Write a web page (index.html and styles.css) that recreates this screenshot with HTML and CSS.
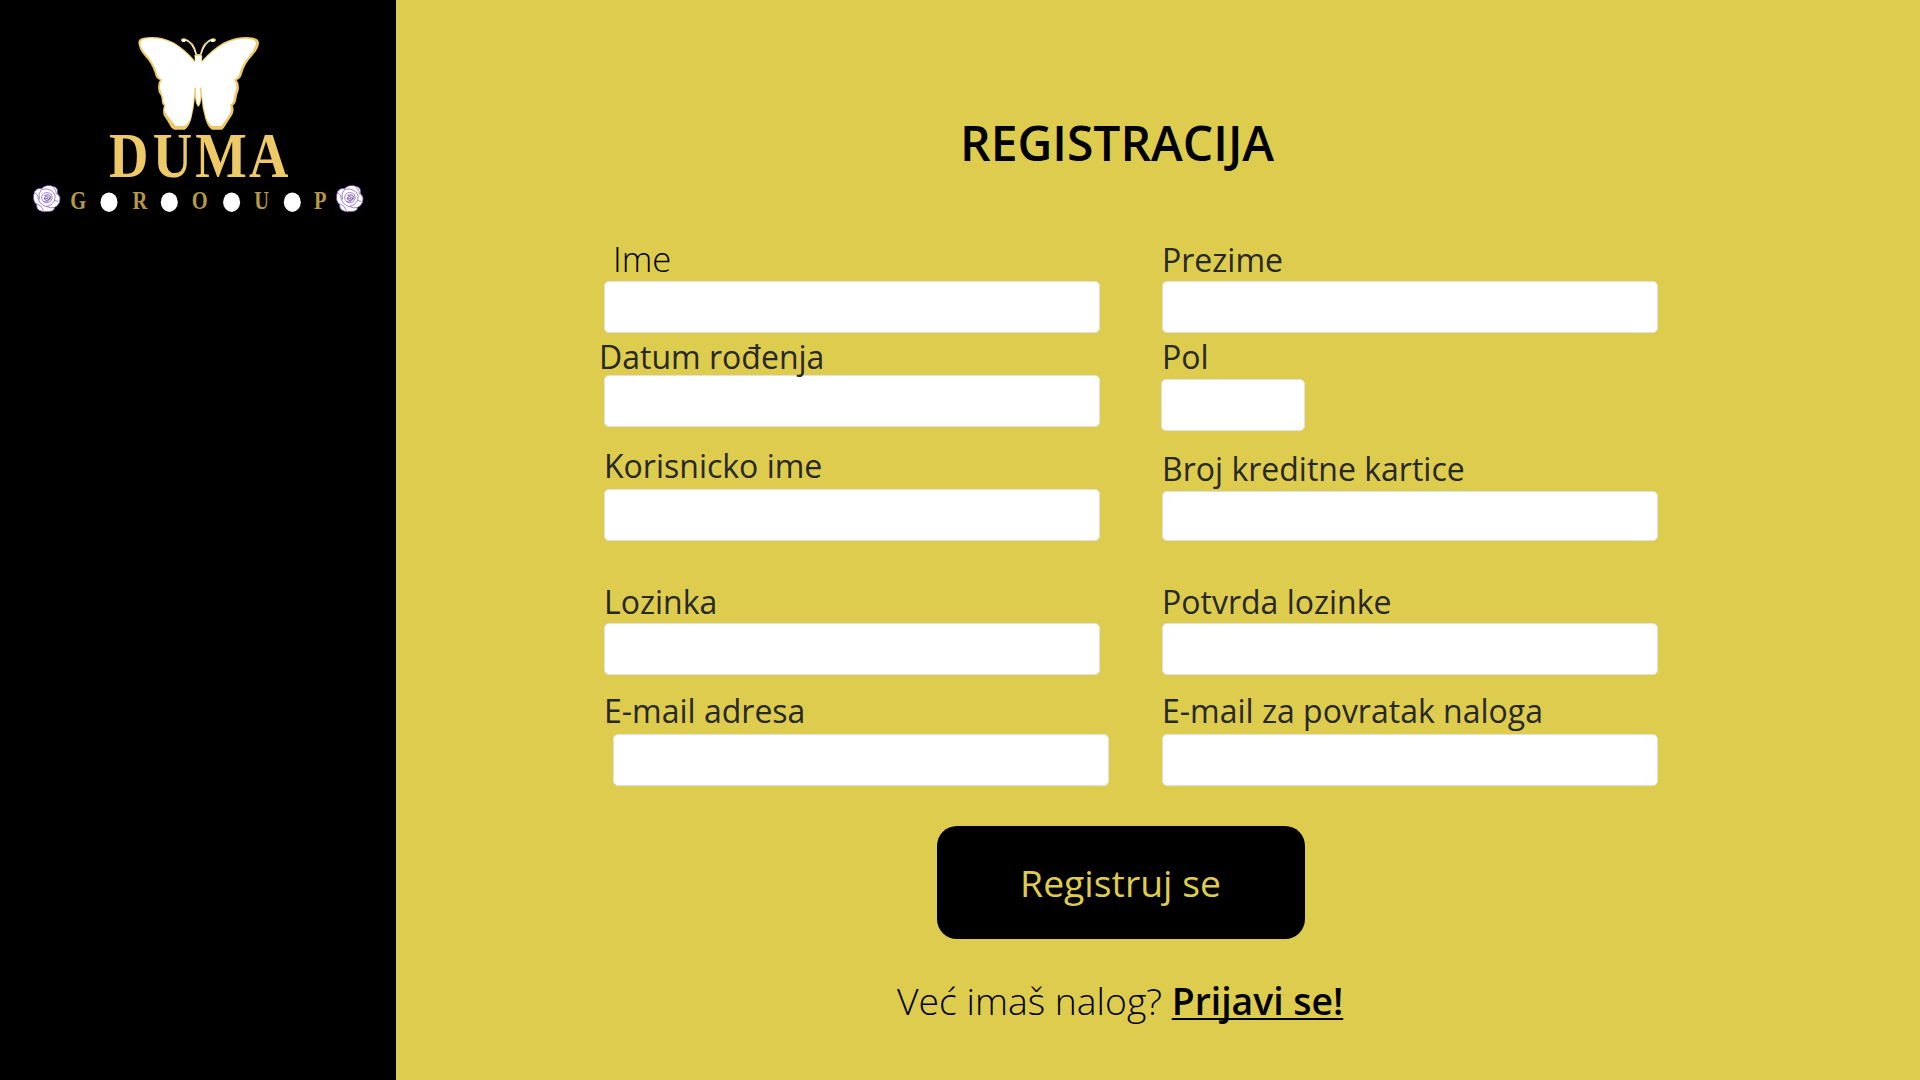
FILE: index.html
```html
<!DOCTYPE html>
<html lang="sr-Latn">
<head>
<meta charset="utf-8">
<title>Duma Group – Registracija</title>
<link rel="stylesheet" href="styles.css">
</head>
<body>
<div class="page">
  <aside class="sidebar">
    <svg class="logo" viewBox="0 0 396 230" role="img" aria-label="Duma Group">
      <defs>
        <g id="rose">
          <path d="M-12 -7 Q-9 -11 -5 -10 Q0 -15 7 -12 Q12 -11 11 -5 Q15 -1 13 4 Q11 8 8 9 Q8 13 2 13 Q-3 14 -7 12 Q-10 11 -10 6 Q-15 2 -12 -7Z" fill="#fff" stroke="#6a40b0" stroke-width=".8"/>
          <g fill="none" stroke="#6236ae" stroke-width=".6">
            <path d="M-4 -4 Q0 -8 5 -4 Q7 0 4 3 Q0 6 -4 2 Q-6 -1 -4 -4Z"/>
            <path stroke-width=".9" d="M-2 -3 Q2 -5 4 -2 Q3 2 0 2 Q-3 1 -2 -1 Q0 -3 2 -1 Q1 1 -1 0"/>
            <path d="M-3 3 Q1 5 5 -1 M-5 -9 Q2 -11 7 -6 M-12 -6 Q-8 -4 -8 1 Q-6 7 0 8 Q6 7 8 2 Q10 -3 7 -6 M-5 -9 Q-9 -5 -7 1 M-10 5 Q-5 7 -3 12 M0 8 Q4 10 8 9 M8 2 L12 3 M7 -11 Q10 -8 10 -4"/>
          </g>
        </g>
      </defs>
      <g transform="scale(.33333)">
        <path fill="#edca67" d="M415 125 Q417 112 450 111 Q485 109 520 127 Q555 147 585 182 L583 166 L588 162 L603 162 L607 168 L606 182 Q637 147 672 127 Q705 111 740 111 Q777 112 777 128 Q777 145 757 167 Q735 190 727 218 Q722 238 710 240 Q719 250 716 271 Q711 283 709 298 Q706 314 698 317 Q704 330 697 344 Q685 362 672 383 L666 389 L636 389 Q623 381 616 357 Q606 326 604 290 Q604 312 595 321 Q586 312 585 290 Q582 326 574 357 Q567 381 554 389 L523 389 L514 383 Q502 362 491 346 Q487 332 492 317 Q485 314 485 298 Q484 286 476 276 Q471 252 480 240 Q468 238 464 218 Q455 190 434 168 Q415 146 415 125Z"/>
        <path fill="#fff" d="M421 129 Q421 117 450 115 Q485 114 520 130 Q555 152 585 188 L585 167 L604 167 L604 188 Q637 152 672 132 Q705 116 738 116 Q768 117 768 130 Q766 145 748 167 Q727 191 720 216 Q715 235 701 239 Q711 250 708 269 Q703 281 701 297 Q699 310 690 315 Q697 330 688 344 Q676 362 664 378 L636 378 Q624 370 618 350 Q607 310 604 262 L600 264 Q604 302 595 317 Q586 302 588 264 L584 262 Q582 310 573 350 Q567 370 554 378 L527 378 Q513 360 496 338 Q491 326 497 315 Q490 310 490 297 Q488 283 481 270 Q477 251 487 239 Q474 235 470 216 Q462 191 442 167 Q421 145 421 129Z"/>
        <path fill="none" stroke="#edca67" stroke-width="5" d="M589 163 Q581 125 553 117 M602 163 Q610 125 638 117"/>
        <path fill="none" stroke="#fff" stroke-width="3" d="M588 163 Q578 127 553 119 M603 163 Q614 127 638 119"/>
        <ellipse cx="550" cy="120" rx="7" ry="5" fill="#edca67"/><ellipse cx="641" cy="120" rx="7" ry="5" fill="#edca67"/>
        <ellipse cx="551" cy="122" rx="6" ry="4" fill="#fff"/><ellipse cx="638" cy="122" rx="6" ry="4" fill="#fff"/>
      </g>
      <text class="logo-name" transform="scale(.86 1)" x="126.7 177.6 227.1 289.5" y="177">DUMA</text>
      <text class="logo-sub" transform="scale(.82 1)" x="85.7 161.6 234 310 383" y="209">GROUP</text>
      <g fill="#fff">
        <ellipse cx="109" cy="202.2" rx="8.5" ry="9.7"/>
        <ellipse cx="169.3" cy="202.2" rx="8.5" ry="9.7"/>
        <ellipse cx="231.6" cy="202.2" rx="8.5" ry="9.7"/>
        <ellipse cx="292.3" cy="202.2" rx="8.5" ry="9.7"/>
      </g>
      <use href="#rose" x="46.5" y="198.5"/>
      <use href="#rose" x="349.5" y="198.5"/>
    </svg>
  </aside>
  <main class="content">
    <h1 class="title">REGISTRACIJA</h1>
    <form class="form">
      <div class="columns">
        <div class="column">
          <div class="field field-first-name"><label for="ime">Ime</label><input id="ime" type="text"></div>
          <div class="field field-birth"><label for="datum">Datum rođenja</label><input id="datum" type="text"></div>
          <div class="field field-user"><label for="korisnik">Korisnicko ime</label><input id="korisnik" type="text"></div>
          <div class="field field-password"><label for="lozinka">Lozinka</label><input id="lozinka" type="password"></div>
          <div class="field field-email"><label for="email">E-mail adresa</label><input id="email" type="text"></div>
        </div>
        <div class="column">
          <div class="field field-last-name"><label for="prezime">Prezime</label><input id="prezime" type="text"></div>
          <div class="field field-gender"><label for="pol">Pol</label><input id="pol" type="text"></div>
          <div class="field field-card"><label for="kartica">Broj kreditne kartice</label><input id="kartica" type="text"></div>
          <div class="field field-password"><label for="potvrda">Potvrda lozinke</label><input id="potvrda" type="password"></div>
          <div class="field field-recovery"><label for="povratak">E-mail za povratak naloga</label><input id="povratak" type="text"></div>
        </div>
      </div>
      <button class="submit" type="button">Registruj se</button>
    </form>
    <p class="login">Već imaš nalog? <a class="login-link" href="#">Prijavi se!</a></p>
  </main>
</div>
</body>
</html>
```
FILE: styles.css
```css
* { box-sizing: border-box; }

body {
  margin: 0;
  font-family: "Open Sans", "Noto Sans", sans-serif;
  color: #000;
}

.page {
  display: flex;
  width: 1920px;
  height: 1080px;
  overflow: hidden;
  background: #ddcc4e;
}

.sidebar {
  flex: 0 0 396px;
  background: #000;
}

.logo {
  display: block;
  width: 396px;
  height: 230px;
}

.logo-name,
.logo-sub {
  font-family: "Liberation Serif", serif;
  font-weight: 700;
}

.logo-name {
  font-size: 63.5px;
  fill: #edca67;
}

.logo-sub {
  font-size: 25px;
  fill: #b5994a;
}

.content {
  flex: 1;
  display: flex;
  flex-direction: column;
  padding-top: 111px;
}

.title {
  margin: 0 0 0 564px;
  font-size: 48px;
  line-height: 64px;
  font-weight: 600;
  white-space: nowrap;
}

.form {
  display: flex;
  flex-direction: column;
  padding: 62px 0 0 208px;
}

.columns {
  display: flex;
  gap: 62px;
}

.column { width: 496px; }

.field {
  display: flex;
  flex-direction: column;
  align-items: flex-start;
}

.field label {
  height: 44px;
  font-size: 32px;
  line-height: 44px;
  color: #282828;
  white-space: nowrap;
}

.field input {
  width: 496px;
  height: 52px;
  padding: 0 12px;
  border: 1px solid #e2e0e0;
  border-radius: 5px;
  background: #fff;
  font: inherit;
  font-size: 28px;
  outline: none;
}

.field-first-name label {
  margin-left: 9px;
  font-size: 34.67px;
  font-weight: 300;
  color: #000;
}

.field-last-name label { line-height: 46px; }

/* the descender of the label runs over the top edge of its input */
.field-birth label {
  z-index: 1;
  height: 40px;
  margin: 2px 0 0 -5px;
}

.field-user { margin-top: 17px; }
.field-user label { height: 45px; }
.field-password { margin-top: 39px; }
.field-password label { height: 43px; }
.field-email { margin-top: 14px; }
.field-email label { height: 45px; }
.field-email input { margin-left: 9px; }

.field-gender { margin-top: 2px; }
.field-gender input { width: 144px; margin-left: -1px; }
.field-card { margin-top: 16px; }
.field-card input { height: 50px; }
.field-recovery { margin-top: 14px; }
.field-recovery label { height: 45px; }

.submit {
  width: 368px;
  height: 113px;
  margin: 40px 0 0 333px;
  padding: 0 1px 0 0;
  border: 0;
  border-radius: 20px;
  background: #000;
  color: #ddcc4e;
  font: 400 37.33px/50px "Open Sans", "Noto Sans", sans-serif;
}

.login {
  margin: 37px 0 0 501px;
  font-size: 37.33px;
  line-height: 50px;
  font-weight: 300;
  white-space: nowrap;
}

.login-link {
  color: #000;
  font-weight: 600;
  text-decoration: underline;
  text-decoration-thickness: 2px;
  text-decoration-skip-ink: none;
  text-underline-offset: 3px;
}
```
